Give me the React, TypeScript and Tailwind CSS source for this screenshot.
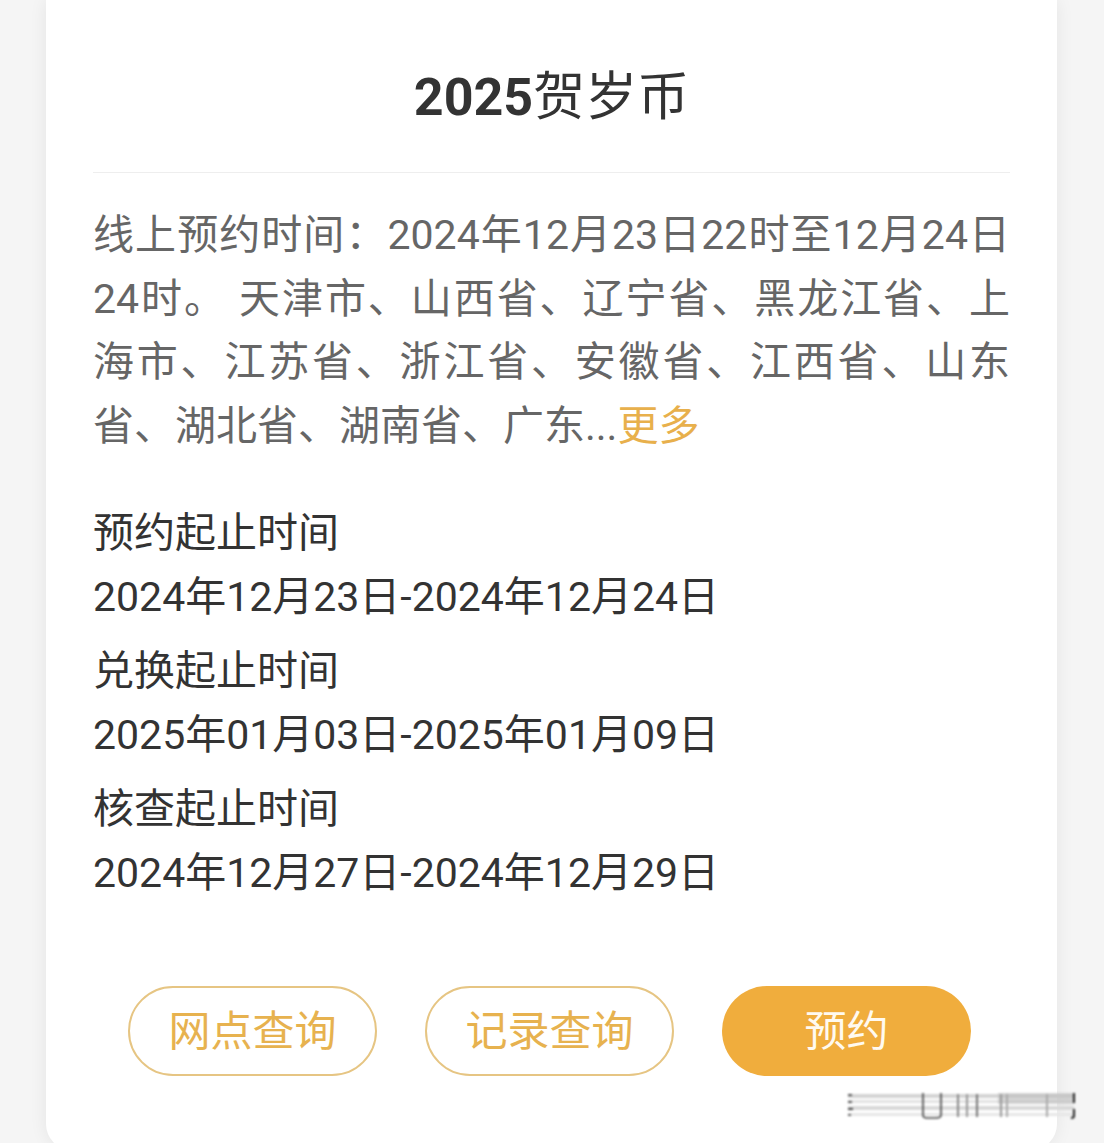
import React from 'react';

const FONT = 'font-["Roboto","Noto_Sans_CJK_SC",sans-serif]';

const dateRows = [
  { label: '预约起止时间', value: '2024年12月23日-2024年12月24日' },
  { label: '兑换起止时间', value: '2025年01月03日-2025年01月09日' },
  { label: '核查起止时间', value: '2024年12月27日-2024年12月29日' },
];

// 线上预约说明，按截图逐行排版
const noticeLines = [
  '线上预约时间：2024年12月23日22时至12月24日',
  '24时。 天津市、山西省、辽宁省、黑龙江省、上',
  '海市、江苏省、浙江省、安徽省、江西省、山东',
];

const Watermark: React.FC = () => (
  <svg width="232" height="30" viewBox="0 0 232 30" className="absolute left-[848px] top-[1091px] blur-[0.8px]">
    <rect x="0" y="3" width="226" height="4" fill="#d4d4d4" />
    <rect x="0" y="9" width="226" height="3" fill="#e2e2e2" />
    <rect x="0" y="15" width="226" height="4" fill="#d8d8d8" />
    <rect x="0" y="22" width="226" height="3" fill="#e6e6e6" />
    <rect x="150" y="2" width="76" height="11" fill="#bdbdbd" opacity="0.6" />
    <rect x="0" y="3" width="4" height="2" fill="#555" />
    <rect x="0" y="10" width="4" height="2" fill="#555" />
    <rect x="0" y="17" width="5" height="2" fill="#444" />
    <rect x="0" y="23" width="3" height="2" fill="#666" />
    <path d="M75 2 V24 Q75 27 79 27 H88 Q93 27 93 24 V2" fill="none" stroke="#444" strokeWidth="1.6" />
    <rect x="109" y="3" width="2" height="23" fill="#888" />
    <rect x="118" y="3" width="2" height="23" fill="#999" />
    <rect x="128" y="3" width="2" height="23" fill="#777" />
    <rect x="152" y="3" width="2" height="23" fill="#999" />
    <rect x="158" y="3" width="2" height="23" fill="#aaa" />
    <rect x="198" y="3" width="2" height="23" fill="#aaa" />
    <path d="M226 2 V12 M226 18 V25 Q226 27 223 27" fill="none" stroke="#222" strokeWidth="2" />
  </svg>
);

const App: React.FC = () => {
  return (
    <div className={`relative w-[1104px] h-[1143px] overflow-hidden bg-[#f5f5f5] ${FONT}`}>
      <div className="ml-[46px] w-[1011px] h-[1150px] bg-white rounded-b-[26px] shadow-[0_0_18px_rgba(0,0,0,0.07)] px-[47px]">
        {/* 标题 */}
        <div className="pt-[66px] pb-[42px] border-b border-[#eeeeee] text-center">
          <h1 className="text-[52px] leading-[64px] text-[#333333]">
            <span className="font-bold">2025</span>
            <span className="font-normal">贺岁币</span>
          </h1>
        </div>

        {/* 线上预约说明 */}
        <div className="mt-[31px] text-[41px] leading-[63.5px] text-[#666666]">
          {noticeLines.map((line) => (
            <div key={line} className="whitespace-nowrap text-justify [text-align-last:justify]">
              {line}
            </div>
          ))}
          <div className="whitespace-nowrap">
            省、湖北省、湖南省、广东...<span className="text-[#e8b04c]">更多</span>
          </div>
        </div>

        {/* 起止时间 */}
        <div className="mt-[43px] flex flex-col gap-[10px] text-[41px] leading-[64px] text-[#333333]">
          {dateRows.map((row) => (
            <div key={row.label}>
              <div>{row.label}</div>
              <div>{row.value}</div>
            </div>
          ))}
        </div>

        {/* 操作按钮 */}
        <div className="mt-[81px] pr-[4px] flex justify-center gap-[48px]">
          <button className="w-[249px] h-[90px] rounded-full border-2 border-[#e6c583] text-[42px] text-[#e7b24f]">
            网点查询
          </button>
          <button className="w-[249px] h-[90px] rounded-full border-2 border-[#e6c583] text-[42px] text-[#e7b24f]">
            记录查询
          </button>
          <button className="w-[249px] h-[90px] rounded-full bg-[#f0ad3d] text-[42px] text-[#fffaf0]">
            预约
          </button>
        </div>
      </div>
      <Watermark />
    </div>
  );
};

export default App;
